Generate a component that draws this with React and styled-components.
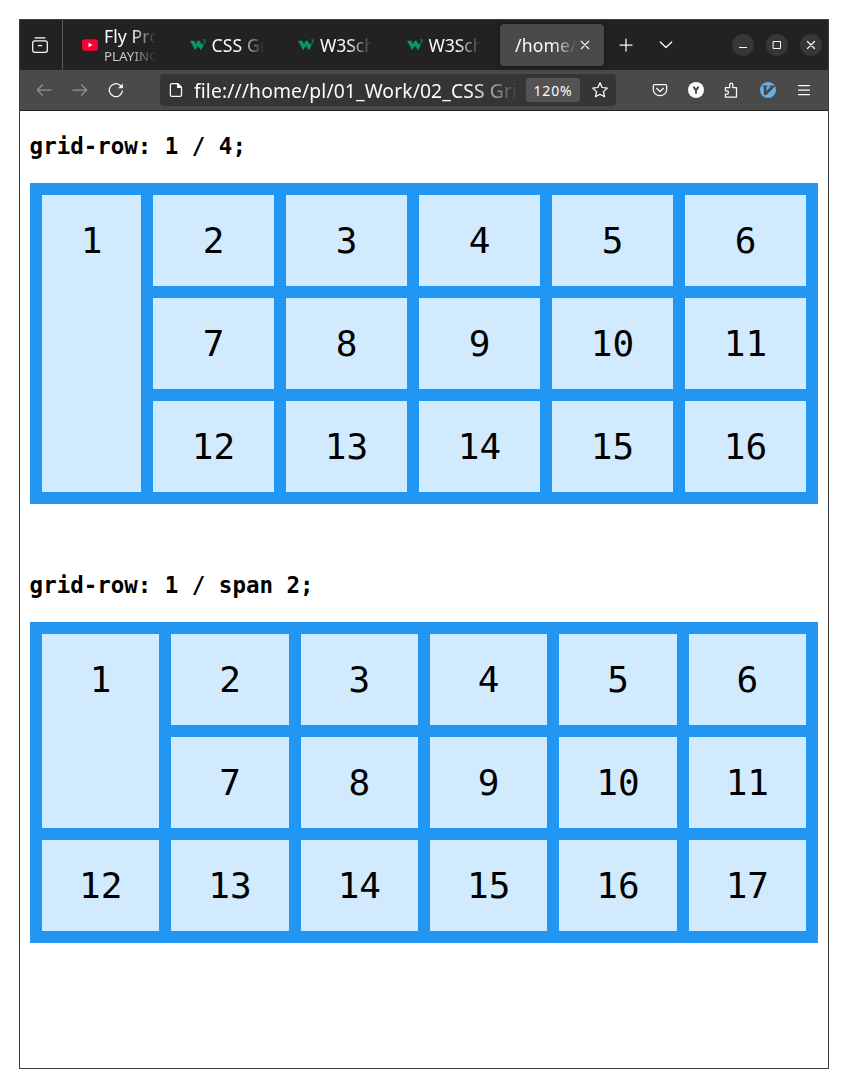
import React from "react";
import styled, { createGlobalStyle } from "styled-components";

const GlobalStyle = createGlobalStyle`
  * { box-sizing: border-box; }
  body { margin: 0; background: #fff; }
`;

const Window = styled.div`
  width: 810px;
  height: 1050px;
  margin: 19px;
  border: 1px solid #3c3c3e;
  background: #fff;
  color: #fbfbfe;
  font-family: "Noto Sans", sans-serif;
`;

const TabBar = styled.header`
  height: 50px;
  display: flex;
  align-items: center;
  background: #222;
`;

const ViewButton = styled.div`
  width: 43px;
  height: 50px;
  padding-right: 2px;
  display: grid;
  place-items: center;
  border-right: 1px solid #5a5a5a;
`;

const Tabs = styled.div`
  display: flex;
  margin-left: 1.5px;
`;

const Tab = styled.div`
  width: 108.5px;
  height: 42px;
  padding-left: ${(p) => p.$inset || 16.5}px;
  display: flex;
  align-items: center;
  gap: 6px;
  overflow: hidden;
`;

const ActiveTab = styled.div`
  width: 104px;
  height: 42px;
  margin-left: 1.5px;
  padding: 0 14px 0 15px;
  display: flex;
  align-items: center;
  gap: 3px;
  border-radius: 4px;
  background: #4a4a4a;
  box-shadow: 0 0 3px #111;
`;

const TabText = styled.div`
  width: ${(p) => p.$width || 52}px;
  flex: none;
  overflow: hidden;
  white-space: nowrap;
  mask-image: linear-gradient(to left, transparent, #000 ${(p) => p.$fade || 24}px);
`;

const Title = styled.div`
  font-size: 17.6px;
  line-height: 22px;
  letter-spacing: ${(p) => p.$spacing || 0}px;
`;

const Playing = styled.div`
  font-size: 13.3px;
  line-height: 18px;
  letter-spacing: 0.05px;
  color: #c8c8ca;
`;

const TabActions = styled.div`
  display: flex;
  gap: 24px;
  margin-left: 13.5px;
`;

const WindowControls = styled.div`
  display: flex;
  gap: 12px;
  margin-left: auto;
  padding-right: 6px;
`;

const Control = styled.div`
  width: 22px;
  height: 22px;
  display: grid;
  place-items: center;
  border-radius: 50%;
  background: #373737;
`;

const Toolbar = styled.nav`
  height: 41px;
  padding: 0 16px;
  display: flex;
  align-items: center;
  background: #4a4a4a;
  border-bottom: 1px solid #202020;
`;

const IconGroup = styled.div`
  display: flex;
  gap: 20px;
`;

const AddressBar = styled.div`
  width: 456px;
  height: 32px;
  margin: 0 36px 0 36px;
  padding: 0 8px;
  display: flex;
  align-items: center;
  border-radius: 4px;
  background: #353535;
`;

const Url = styled.div`
  width: 325px;
  margin-left: 10px;
  padding-top: 1px;
  overflow: hidden;
  white-space: nowrap;
  font-size: 19.3px;
  line-height: 28px;
  letter-spacing: 0.12px;
  mask-image: linear-gradient(to left, transparent, #000 48px);
`;

const Zoom = styled.div`
  width: 54px;
  height: 24px;
  margin: 0 12px 0 7px;
  padding-top: 1px;
  border-radius: 3px;
  background: #535355;
  font-size: 14px;
  line-height: 24px;
  letter-spacing: 0.8px;
  text-align: center;
`;

const Page = styled.main`
  padding: 0 10px;
  color: #000;
  font-family: "DejaVu Sans Mono", monospace;
`;

const Section = styled.section`
  padding-top: 22px;
  height: 439px;
`;

const Heading = styled.h3`
  margin: 0 0 23px -0.4px;
  font-size: 22.46px;
  line-height: 27px;
`;

const Grid = styled.div`
  display: grid;
  grid-template-columns: ${(p) => p.$columns};
  gap: 12px;
  padding: 12px;
  background: #2196f3;
`;

const Item = styled.div`
  padding: 24px 0;
  grid-row: ${(p) => p.$row || "auto"};
  background: rgba(255, 255, 255, 0.8);
  font-size: 36px;
  line-height: 43px;
  text-align: center;
`;

const Icon = ({ size = 16, children }) => (
  <svg
    width={size}
    height={size}
    viewBox="0 0 16 16"
    fill="none"
    stroke="#fbfbfe"
    strokeWidth="1.25"
    strokeLinecap="round"
    strokeLinejoin="round"
    style={{ display: "block", flex: "none" }}
  >
    {children}
  </svg>
);

const W3Logo = () => (
  <Icon>
    <path
      d="M0 3.7h4.3L6 7.3l1.6-3.6h2.2l1.7 3.7 1.2-1.3.8 2.6-2.6 4.6-3-4.6-2.7 4.6z"
      fill="#059862"
      stroke="none"
    />
    <path d="M13.4 2.9h2l-1.1 1.5c1.7.1 1.6 2.2-.9 1.7" stroke="#059862" strokeWidth=".9" />
  </Icon>
);

const YouTubeLogo = () => (
  <Icon>
    <rect x="0" y="2.2" width="16" height="11.6" rx="3.2" fill="#ff0033" stroke="none" />
    <path d="M6.5 5.7v4.6l4-2.3z" fill="#fff" stroke="none" />
  </Icon>
);

const Demo = ({ title, columns, row, count }) => (
  <Section>
    <Heading>{title}</Heading>
    <Grid $columns={columns}>
      {Array.from({ length: count }, (_, i) => (
        <Item key={i} $row={i === 0 ? row : undefined}>{i + 1}</Item>
      ))}
    </Grid>
  </Section>
);

export default function App() {
  return (
    <>
      <GlobalStyle />
      <Window>
        <TabBar>
          <ViewButton>
            <Icon>
              <path d="M3 .9h10" />
              <rect x=".7" y="3.9" width="14.6" height="11.4" rx="2" />
              <path d="M6.3 8.6h3.4" />
            </Icon>
          </ViewButton>
          <Tabs>
            <Tab $inset={17.5}>
              <YouTubeLogo />
              <TabText>
                <Title $spacing={0.1}>Fly Project</Title>
                <Playing>PLAYING</Playing>
              </TabText>
            </Tab>
            <Tab>
              <W3Logo />
              <TabText><Title $spacing={0.1}>CSS Grid</Title></TabText>
            </Tab>
            <Tab>
              <W3Logo />
              <TabText><Title $spacing={-0.1}>W3Schools</Title></TabText>
            </Tab>
            <Tab>
              <W3Logo />
              <TabText><Title $spacing={-0.1}>W3Schools</Title></TabText>
            </Tab>
            <ActiveTab>
              <TabText $width={62}><Title $spacing={0.15}>/home/pl/</Title></TabText>
              <Icon size={10}><path d="M2 2l12 12M14 2L2 14" strokeWidth="1.7" /></Icon>
            </ActiveTab>
          </Tabs>
          <TabActions>
            <Icon><path d="M8 2v12M2 8h12" /></Icon>
            <Icon><path d="M2.3 5L8 10.5 13.7 5" /></Icon>
          </TabActions>
          <WindowControls>
            <Control><Icon><path d="M4 10.5h8" strokeLinecap="butt" strokeWidth="1" /></Icon></Control>
            <Control><Icon><path d="M4.5 4.5h7v7h-7z" strokeWidth="1" strokeLinejoin="miter" /></Icon></Control>
            <Control><Icon><path d="M4.5 4.5l7 7M11.5 4.5l-7 7" /></Icon></Control>
          </WindowControls>
        </TabBar>
        <Toolbar>
          <IconGroup>
            <Icon><path d="M15 8H1.5M6.5 2.8L1.3 8l5.2 5.2" stroke="#929294" /></Icon>
            <Icon><path d="M1 8h13.5M9.5 2.8L14.7 8l-5.2 5.2" stroke="#929294" /></Icon>
            <Icon>
              <path d="M14.3 9A6.5 6.5 0 1 1 12 3.2l2 2" />
              <path d="M14.8 1.5v4.8H10z" fill="#fbfbfe" stroke="none" />
            </Icon>
          </IconGroup>
          <AddressBar>
            <Icon>
              <path d="M3.9 1.6h5.8l3.8 3.8v7.5c0 1-.6 1.5-1.5 1.5H3.9c-.9 0-1.5-.5-1.5-1.5V3.1c0-.9.6-1.5 1.5-1.5z" />
              <path d="M9.7 1.6v3.8h3.8z" fill="#fbfbfe" />
            </Icon>
            <Url>file:///home/pl/01_Work/02_CSS Grid/</Url>
            <Zoom>120%</Zoom>
            <Icon><path d="M8 .8l2.1 4.7 5.2.6-3.8 3.5 1 5.2L8 12.2l-4.5 2.6 1-5.2L.7 6.1l5.2-.6z" /></Icon>
          </AddressBar>
          <IconGroup>
            <Icon>
              <path d="M2.8 2.5h10.4c1 0 1.5.6 1.5 1.5v3.3c0 3.7-3 6.3-6.7 6.3S1.3 11 1.3 7.3V4c0-.9.5-1.5 1.5-1.5z" />
              <path d="M4.6 6.3L8 9.5l3.4-3.2" />
            </Icon>
            <Icon>
              <circle cx="8" cy="8" r="8" fill="#fbfbfe" stroke="none" />
              <path d="M5.4 4.6L8 8.4l2.6-3.8M8 8.2v3.6" stroke="#4a4a4a" strokeWidth="1.9" strokeLinecap="butt" />
            </Icon>
            <Icon>
              <path d="M1.4 8.2V5.5h4.3V2.9c0-2.4 3.1-2.4 3.1 0v2.6h3.7v9.7H1.4v-3h1.4c2.3 0 2.3-3.4 0-3.4H1.4" />
            </Icon>
            <Icon>
              <circle cx="8" cy="8" r="8" fill="#66afe0" stroke="none" />
              <path d="M2.8 3.4h4.6v1.4h-.9v4.1l4-4.1h-1V3.4h5.2v1.4L6.4 13H3.8V4.8h-1z" fill="#414a52" stroke="none" />
            </Icon>
            <Icon><path d="M2.5 3.5h11M2.5 8h11M2.5 12.5h11" /></Icon>
          </IconGroup>
        </Toolbar>
        <Page>
          <Demo title="grid-row: 1 / 4;" columns="99px repeat(5, 1fr)" row="1 / 4" count={16} />
          <Demo title="grid-row: 1 / span 2;" columns="repeat(6, 1fr)" row="1 / span 2" count={17} />
        </Page>
      </Window>
    </>
  );
}
